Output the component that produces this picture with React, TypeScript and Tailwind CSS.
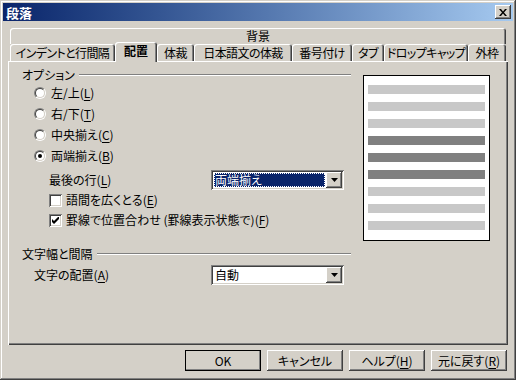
import type React from "react"

const raised =
  "shadow-[inset_-1px_-1px_#404040,inset_1px_1px_#ffffff,inset_-2px_-2px_#808080,inset_2px_2px_#d4d0c8]"
const sunken =
  "shadow-[inset_1px_1px_#808080,inset_-1px_-1px_#ffffff,inset_2px_2px_#404040,inset_-2px_-2px_#d4d0c8]"

function Key({ k }: { k: string }) {
  return (
    <>
      (<span className="underline underline-offset-2">{k}</span>)
    </>
  )
}

function Radio({ checked, children }: { checked?: boolean; children: React.ReactNode }) {
  return (
    <div className="flex h-[21px] items-center">
      <div className="ml-[12px] flex h-[12px] w-[12px] items-center justify-center rounded-full border border-t-[#808080] border-l-[#808080] border-r-white border-b-white">
        <div className="flex h-[10px] w-[10px] items-center justify-center rounded-full border border-t-[#404040] border-l-[#404040] border-r-[#d4d0c8] border-b-[#d4d0c8] bg-white">
          {checked && <div className="h-[4px] w-[4px] rounded-full bg-black" />}
        </div>
      </div>
      <span className="ml-[5px]">{children}</span>
    </div>
  )
}

function Check({ checked, children }: { checked?: boolean; children: React.ReactNode }) {
  return (
    <div className="flex h-[20px] items-center pl-[27px]">
      <div className={`flex h-[13px] w-[13px] items-center justify-center bg-white ${sunken}`}>
        {checked && (
          <svg width="7" height="7" viewBox="0 0 7 7">
            <path d="M0 2v3l2 2 5-5V-1L2 4z" fill="#000" />
          </svg>
        )}
      </div>
      <span className="ml-[4px]">{children}</span>
    </div>
  )
}

function Combo({ value, selected }: { value: string; selected?: boolean }) {
  return (
    <div className={`flex h-[20px] w-[133px] bg-white p-[2px] ${sunken}`}>
      <div className="flex flex-1 p-[1px]">
        <div
          className={`flex h-full w-full items-center pl-[1px] leading-none ${
            selected ? "bg-[#0a246a] text-white outline-1 -outline-offset-1 outline-dotted outline-white" : ""
          }`}
        >
          {value}
        </div>
      </div>
      <div className={`flex h-full w-[16px] items-center justify-center bg-[#d4d0c8] ${raised}`}>
        <svg width="7" height="4" viewBox="0 0 7 4">
          <path d="M0 0h7L3.5 4z" fill="#000" />
        </svg>
      </div>
    </div>
  )
}

function GroupHead({ label }: { label: string }) {
  return (
    <div className="flex h-[14px] items-center">
      <span className="pr-[4px]">{label}</span>
      <div className="flex-1 border-t border-b border-t-[#808080] border-b-white" />
    </div>
  )
}

function Button({ label, def }: { label: React.ReactNode; def?: boolean }) {
  return (
    <div
      className={`flex h-[21px] w-[76px] items-center justify-center bg-[#d4d0c8] ${raised} ${
        def ? "outline outline-black -outline-offset-1" : ""
      }`}
    >
      {label}
    </div>
  )
}

const tabs = [
  { label: "インデントと行間隔", w: "w-[105px]" },
  { label: "配置", w: "w-[42px]", active: true },
  { label: "体裁", w: "w-[37px]" },
  { label: "日本語文の体裁", w: "w-[98px]" },
  { label: "番号付け", w: "w-[60px]" },
  { label: "タブ", w: "w-[32px]" },
  { label: "ドロップキャップ", w: "w-[84px]" },
  { label: "外枠", w: "w-[38px]" },
]

const tabShadow = "shadow-[inset_1px_1px_#ffffff,inset_-1px_0_#404040,inset_-2px_0_#808080]"

export default function App() {
  const bars = ["l", "l", "l", "d", "d", "d", "l", "l", "l"]

  return (
    <div
      className={`flex h-[380px] w-[516px] flex-col bg-[#d4d0c8] p-[3px] text-[12px] leading-none text-black font-['Noto_Sans_CJK_JP','Noto_Sans',sans-serif] [font-feature-settings:'palt'] shadow-[inset_-1px_-1px_#404040,inset_1px_1px_#d4d0c8,inset_-2px_-2px_#808080,inset_2px_2px_#ffffff]`}
    >
      {/* title bar */}
      <div className="flex h-[18px] items-center bg-linear-to-r from-[#0a246a] to-[#a6caf0] pr-[2px] pl-[3px]">
        <span className="flex-1 text-[13px] font-bold text-white">段落</span>
        <div className={`flex h-[14px] w-[16px] items-center justify-center bg-[#d4d0c8] ${raised}`}>
          <svg width="8" height="7" viewBox="0 0 8 7">
            <path d="M0 0h2l2 2.5L6 0h2L5 3.5 8 7H6L4 4.5 2 7H0l3-3.5z" fill="#000" />
          </svg>
        </div>
      </div>

      <div className="flex flex-1 flex-col px-[5px] pt-[7px]">
        {/* tab rows */}
        <div className="flex flex-col pl-[2px]">
          <div className={`flex h-[16px] w-[496px] items-start justify-center rounded-t-[3px] pt-[2px] ${tabShadow}`}>
            背景
          </div>
          <div className="flex h-[17px] items-start">
            {tabs.map((t) =>
              t.active ? (
                <div
                  key={t.label}
                  className={`relative z-10 -mt-[2px] flex h-[20px] ${t.w} items-start justify-center rounded-t-[3px] bg-[#d4d0c8] pt-[3px] font-bold ${tabShadow}`}
                >
                  {t.label}
                </div>
              ) : (
                <div
                  key={t.label}
                  className={`flex h-[17px] ${t.w} items-start justify-center whitespace-nowrap rounded-t-[3px] pt-[3px] tracking-[-0.6px] ${tabShadow}`}
                >
                  {t.label}
                </div>
              )
            )}
          </div>
        </div>

        {/* panel */}
        <div className="flex h-[284px] w-[500px] shadow-[inset_1px_1px_#ffffff,inset_-1px_-1px_#404040,inset_-2px_-2px_#808080]">
          <div className="flex w-[343px] flex-col pt-[7px] pl-[14px]">
            <GroupHead label="オプション" />
            <Radio>
              左/上<Key k="L" />
            </Radio>
            <Radio>
              右/下<Key k="T" />
            </Radio>
            <Radio>
              中央揃え<Key k="C" />
            </Radio>
            <Radio checked>
              両端揃え<Key k="B" />
            </Radio>
            <div className="mt-[4px] flex h-[20px] items-center">
              <span className="w-[189px] pl-[27px]">
                最後の行<Key k="L" />
              </span>
              <Combo value="両端揃え" selected />
            </div>
            <Check>
              語間を広くとる<Key k="E" />
            </Check>
            <Check checked>
              罫線で位置合わせ (罫線表示状態で)<Key k="F" />
            </Check>

            <div className="mt-[17px]">
              <GroupHead label="文字幅と間隔" />
            </div>
            <div className="mt-[4px] flex h-[20px] items-center">
              <span className="w-[189px] pl-[12px]">
                文字の配置<Key k="A" />
              </span>
              <Combo value="自動" />
            </div>
          </div>

          {/* preview */}
          <div className="ml-[12px] mt-[14px] flex h-[166px] w-[127px] flex-col gap-[8px] border border-black bg-white px-[4px] pt-[9px]">
            {bars.map((b, i) => (
              <div key={i} className={`h-[9px] ${b === "d" ? "bg-[#808080]" : "bg-[#c8c8c8]"}`} />
            ))}
          </div>
        </div>

        {/* buttons */}
        <div className="mt-[5px] flex justify-end gap-[6px] pr-[1px]">
          <Button label="OK" def />
          <Button label="キャンセル" />
          <Button
            label={
              <>
                ヘルプ<Key k="H" />
              </>
            }
          />
          <Button
            label={
              <>
                元に戻す<Key k="R" />
              </>
            }
          />
        </div>
      </div>
    </div>
  )
}
